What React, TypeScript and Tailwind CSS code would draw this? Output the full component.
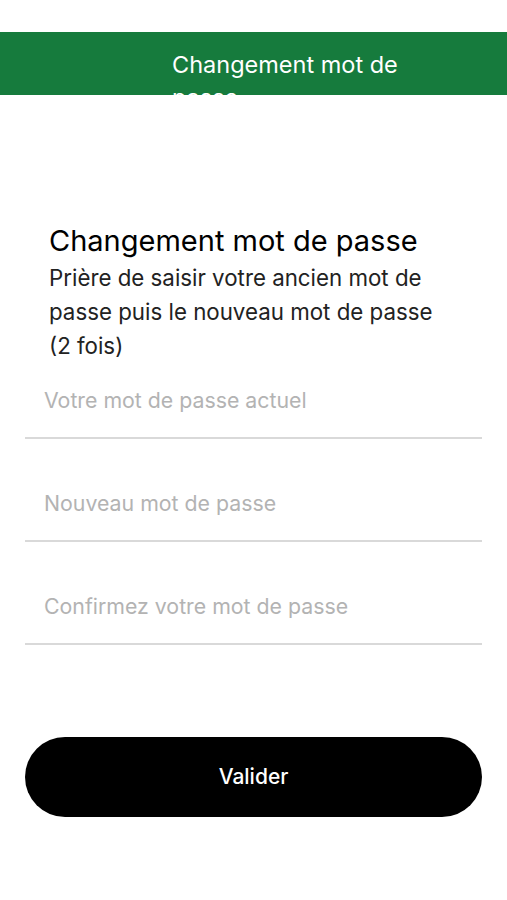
import React, { useState } from 'react';

const fields = [
  { id: 'current', placeholder: 'Votre mot de passe actuel' },
  { id: 'new', placeholder: 'Nouveau mot de passe' },
  { id: 'confirm', placeholder: 'Confirmez votre mot de passe' },
];

const App: React.FC = () => {
  const [values, setValues] = useState<Record<string, string>>({});

  return (
    <div className="min-h-[900px] bg-white font-['Inter',sans-serif]">
      <div className="h-[32px] bg-white" />
      <header className="h-[63px] overflow-hidden bg-[#167b3d]">
        <div className="pl-[172px] pt-[16px] w-[430px] text-[23.5px] leading-[33px] text-white">
          Changement mot de passe
        </div>
      </header>

      <main className="px-[25px]">
        <div className="mt-[129px] px-[24px]">
          <h1 className="text-[29px] leading-[34px] text-black">Changement mot de passe</h1>
          <p className="mt-[3px] w-[400px] text-[22.3px] leading-[34px] text-[#222]">
            Prière de saisir votre ancien mot de passe puis le nouveau mot de passe (2 fois)
          </p>
        </div>

        <div className="flex flex-col gap-[27px]">
          {fields.map(f => (
            <input
              key={f.id}
              type="password"
              value={values[f.id] || ''}
              onChange={e => setValues(prev => ({ ...prev, [f.id]: e.target.value }))}
              placeholder={f.placeholder}
              className="h-[76px] w-full border-b-2 border-[#d9d9d9] pl-[19px] text-[21.3px] text-black outline-none placeholder:text-[#b3b3b3]"
            />
          ))}
        </div>

        <button className="mt-[92px] h-[80px] w-full rounded-full bg-black text-[21px] font-medium text-white">
          Valider
        </button>
      </main>
    </div>
  );
};

export default App;
